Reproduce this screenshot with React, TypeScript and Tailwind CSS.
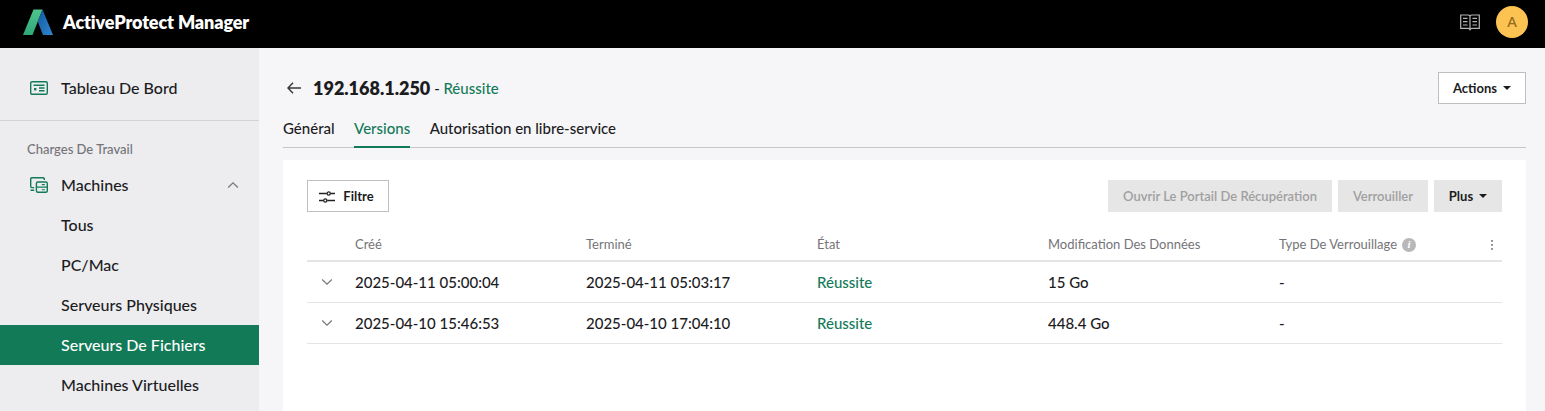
import React, { useState } from "react";

const machines = [
  "Tous",
  "PC/Mac",
  "Serveurs Physiques",
  "Serveurs De Fichiers",
  "Machines Virtuelles",
];

const tabs = ["Général", "Versions", "Autorisation en libre-service"];

const versions = [
  {
    created: "2025-04-11 05:00:04",
    finished: "2025-04-11 05:03:17",
    status: "Réussite",
    change: "15 Go",
    lock: "-",
  },
  {
    created: "2025-04-10 15:46:53",
    finished: "2025-04-10 17:04:10",
    status: "Réussite",
    change: "448.4 Go",
    lock: "-",
  },
];

const Logo = () => (
  <svg className="w-[31px] h-[27px]" viewBox="0 0 31 27">
    <defs>
      <linearGradient id="logo-green" x1="0" y1="0" x2="0" y2="1">
        <stop offset="0" stopColor="#4fc48c" />
        <stop offset="1" stopColor="#2fa878" />
      </linearGradient>
      <linearGradient id="logo-blue" x1="0" y1="0" x2="1" y2="1">
        <stop offset="0" stopColor="#12599c" />
        <stop offset="1" stopColor="#2f86d2" />
      </linearGradient>
    </defs>
    <path d="M11.5 0.5H20.5L10.5 26H1Z" fill="url(#logo-green)" />
    <path d="M20.5 0.5L31 26H21L15.7 12.5Z" fill="url(#logo-blue)" />
  </svg>
);

const BookIcon = () => (
  <svg
    className="w-5 h-[17px]"
    viewBox="0 0 20 17"
    fill="none"
    stroke="#b4b4b4"
    strokeWidth="1.2"
  >
    <path d="M10 1.7C9.5 1.2 9 1 8 1H0.7V14.4H8.3C9.2 14.4 10 14.8 10 15.8C10 14.8 10.8 14.4 11.7 14.4H19.3V1H12C11 1 10.5 1.2 10 1.7Z" />
    <path d="M10 1.7V16.5M3 4.4H7.5M3 7.7H7.5M3 11H7.5M12.5 4.4H17M12.5 7.7H17M12.5 11H17" />
  </svg>
);

const DashboardIcon = () => (
  <svg
    className="w-[18px] h-[14px]"
    viewBox="0 0 18 14"
    fill="none"
    stroke="#137a58"
    strokeWidth="1.4"
  >
    <rect x="0.7" y="0.7" width="16.6" height="12.6" rx="1.4" />
    <path d="M3.5 4.2H14.5M9 7H14.5M9 9.8H14.5" />
    <rect x="4" y="7" width="2.4" height="2.4" fill="#137a58" stroke="none" />
  </svg>
);

const MachinesIcon = () => (
  <svg
    className="w-[18px] h-4"
    viewBox="0 0 18 16"
    fill="none"
    stroke="#137a58"
    strokeWidth="1.4"
  >
    <path d="M14.3 3V1.9Q14.3 0.7 13.1 0.7H1.9Q0.7 0.7 0.7 1.9V9.6Q0.7 10.6 1.7 10.6H4.2M0.5 13.2H4.2" />
    <rect x="6.4" y="5" width="10.9" height="10.3" rx="1.5" />
    <path d="M6.4 10.1H17.3M11.8 7.6H14.8M11.8 12.8H14.8" strokeWidth="1.1" />
  </svg>
);

const Chevron = ({ up = false }: { up?: boolean }) => (
  <svg
    className="w-3 h-2"
    viewBox="0 0 12 8"
    fill="none"
    stroke="#777"
    strokeWidth="1.2"
  >
    <path d={up ? "M1.2 6.5L6 1.8L10.8 6.5" : "M1.2 1.5L6 6.2L10.8 1.5"} />
  </svg>
);

const Caret = () => (
  <svg className="w-2 h-1 mb-px" viewBox="0 0 8 4" fill="#1c1c1c">
    <path d="M0 0H8L4 4Z" />
  </svg>
);

const BackIcon = () => (
  <svg
    className="w-[14px] h-3"
    viewBox="0 0 14 12"
    fill="none"
    stroke="#3a3a3c"
    strokeWidth="1.5"
  >
    <path d="M14 6H1M6 0.8L1 6L6 11.2" />
  </svg>
);

const FilterIcon = () => (
  <svg
    className="w-4 h-3"
    viewBox="0 0 16 12"
    fill="none"
    stroke="#222"
    strokeWidth="1.3"
  >
    <path d="M0 2.5H7.8M11.6 2.5H16M0 9.5H4.4M8.2 9.5H16" />
    <circle cx="9.7" cy="2.5" r="1.6" />
    <circle cx="6.3" cy="9.5" r="1.6" />
  </svg>
);

const App: React.FC<{}> = () => {
  const [machine, setMachine] = useState("Serveurs De Fichiers");
  const [tab, setTab] = useState("Versions");

  return (
    <div className="flex flex-col w-full h-screen overflow-hidden bg-[#f6f6f9] text-[#1c1c1e] text-[15px] font-medium font-['Lato',sans-serif]">
      <header className="flex items-center justify-between h-12 shrink-0 bg-black pl-[22px] pr-[17px] pb-1">
        <div className="flex items-center gap-[10px]">
          <Logo />
          <span className="text-white text-lg leading-6 font-extrabold tracking-[-0.12px] [font-variant-ligatures:none]">
            ActiveProtect Manager
          </span>
        </div>
        <div className="flex items-center gap-4">
          <BookIcon />
          <div className="flex items-center justify-center w-8 h-8 rounded-full bg-[#fdc352] text-[#946a1c] text-sm font-semibold">
            A
          </div>
        </div>
      </header>

      <div className="flex flex-1 min-h-0">
        {/* Sidebar */}
        <nav className="w-[259px] shrink-0 bg-[#ededf0] text-base">
          <div className="flex items-center h-[73px] pt-2 pl-[30px] gap-[13px] border-b border-[#d3d3d6]">
            <DashboardIcon />
            <span>Tableau De Bord</span>
          </div>
          <div className="flex items-center h-[44px] pt-[13px] pl-[27px] text-[13px] text-[#747478]">
            Charges De Travail
          </div>
          <div className="flex items-center h-10 pl-[30px] pr-[20px] gap-[13px]">
            <MachinesIcon />
            <span className="flex-1">Machines</span>
            <Chevron up />
          </div>
          {machines.map((name) => (
            <div
              key={name}
              className={`flex items-center h-10 pl-[61px] ${
                name === machine ? "bg-[#137a58] text-white" : ""
              }`}
              onClick={() => setMachine(name)}
            >
              {name}
            </div>
          ))}
        </nav>

        {/* Content */}
        <main className="flex flex-col flex-1 min-w-0 pl-6 pr-[19px] pt-6">
          <div className="flex items-center justify-between h-8">
            <div className="flex items-center pl-1">
              <BackIcon />
              <h1 className="ml-3 text-lg font-extrabold">192.168.1.250</h1>
              <span className="ml-1">-</span>
              <span className="ml-[3.5px] text-[#137a58]">Réussite</span>
            </div>
            <button className="flex items-center justify-center gap-[6px] w-[88px] h-8 pt-px bg-white border border-[#bfbfc2] text-[13px] font-bold">
              Actions
              <Caret />
            </button>
          </div>

          <div className="flex shrink-0 gap-[19.5px] h-11 border-b border-[#c6c6c9]">
            {tabs.map((name) => (
              <div
                key={name}
                className={`h-11 pt-[13px] leading-[22px] ${
                  name === tab ? "border-b-2 border-[#137a58] text-[#137a58]" : ""
                }`}
                onClick={() => setTab(name)}
              >
                {name}
              </div>
            ))}
          </div>

          <section className="flex-1 mt-3 bg-white px-6 pt-5">
            <div className="flex justify-between text-[13px] font-semibold">
              <button className="flex items-center justify-center gap-2 w-[82px] h-8 pt-px pr-[3px] border border-[#bfbfc2] font-bold">
                <FilterIcon />
                Filtre
              </button>
              <div className="flex gap-[6px]">
                <button className="w-56 h-8 pt-px bg-[#e6e6e6] text-[#a0a0a0]">
                  Ouvrir Le Portail De Récupération
                </button>
                <button className="w-[90px] h-8 pt-px bg-[#e6e6e6] text-[#a0a0a0]">
                  Verrouiller
                </button>
                <button className="flex items-center justify-center gap-[6px] w-[68px] h-8 pt-px bg-[#e6e6e6] font-bold">
                  Plus
                  <Caret />
                </button>
              </div>
            </div>

            <div className="grid grid-cols-[48px_231px_231px_231px_231px_1fr_20px] items-center h-[50px] pt-[17px] border-b-2 border-[#e4e4e4] text-[13px] font-normal text-[#747478]">
              <span />
              <span>Créé</span>
              <span>Terminé</span>
              <span>État</span>
              <span>Modification Des Données</span>
              <span className="flex items-center gap-[5px]">
                Type De Verrouillage
                <span className="flex items-center justify-center w-[14px] h-[14px] rounded-full bg-[#b8b8b8] text-white text-[11px] font-bold italic font-['Liberation_Serif',serif]">
                  i
                </span>
              </span>
              <svg className="w-5 h-3" viewBox="0 0 20 12" fill="#747478">
                <rect x="9.2" y="1" width="1.6" height="1.8" />
                <rect x="9.2" y="5" width="1.6" height="1.8" />
                <rect x="9.2" y="9" width="1.6" height="1.8" />
              </svg>
            </div>
            {versions.map((v) => (
              <div
                key={v.created}
                className="grid grid-cols-[48px_231px_231px_231px_231px_1fr_20px] items-center h-[41px] border-b border-[#e4e4e4]"
              >
                <span className="pl-[14px]">
                  <Chevron />
                </span>
                <span>{v.created}</span>
                <span>{v.finished}</span>
                <span className="text-[#137a58]">{v.status}</span>
                <span>{v.change}</span>
                <span>{v.lock}</span>
              </div>
            ))}
          </section>
        </main>
      </div>
    </div>
  );
};

export default App;
